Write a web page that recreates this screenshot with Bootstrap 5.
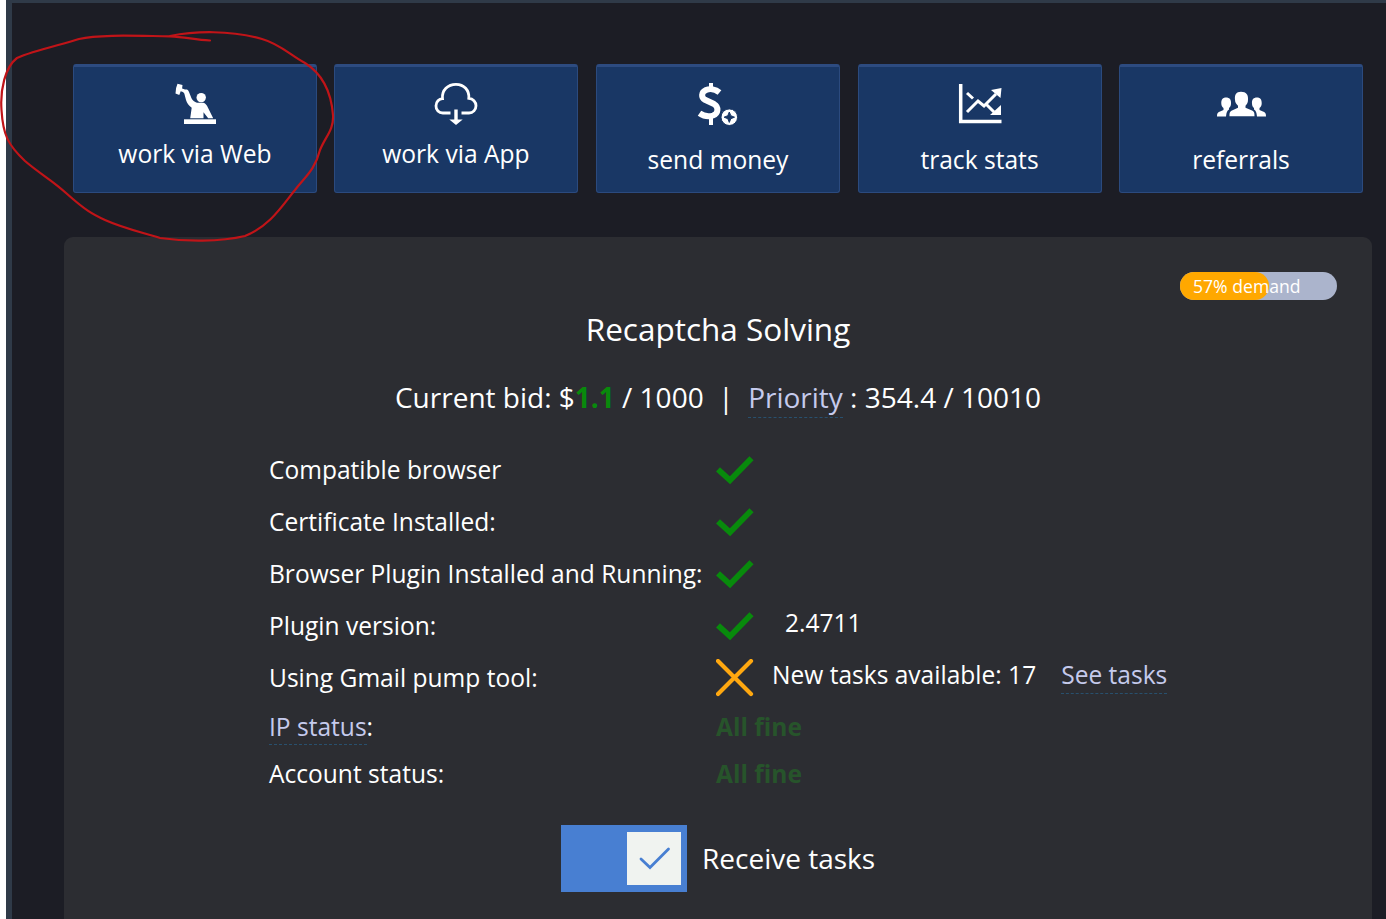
<!DOCTYPE html>
<html lang="en">
<head>
<meta charset="utf-8">
<meta name="viewport" content="width=device-width, initial-scale=1">
<title>Recaptcha Solving</title>
<link href="https://cdn.jsdelivr.net/npm/bootstrap@5.3.0/dist/css/bootstrap.min.css" rel="stylesheet">
<style>
body{font-family:"Open Sans","Noto Sans",sans-serif;background:#fff;color:#fff;height:919px;overflow:hidden}
.shell{height:919px;margin-left:6px;border-left:6px solid #2f3a48;border-top:3px solid #2f3a48;background:#1c1d25;padding:61px 14px 0 52px}
.tiles{display:grid;grid-template-columns:repeat(5,244px);justify-content:space-between;margin:0 9px 44px}
.tile{width:244px;height:129px;background:#193765;border:1px solid #2b4a7e;border-top:3px solid #2d4b80;border-radius:3px;color:#fff;font-size:24.6px;line-height:34px;padding-top:13px}
.tile:nth-child(2){margin-left:-.6px}
.tile svg{display:block;margin-bottom:1px}
.tile.low svg{margin-bottom:7px}
.panel{height:690px;background:#2c2d32;border-radius:9px 9px 8px 8px;padding:35px 35px 0}
.demand{width:157px;height:28px;border-radius:14px;background:#abb4cc;font-size:17.6px;line-height:28px}
.demand-fill{height:28px;border-radius:14px;background:#ffa800}
.demand-text{left:13px;top:0}
.heading{font-size:31.500px;line-height:44px;margin:7px 0 0}
.bid{font-size:28px;line-height:40px;margin-top:26px;white-space:pre}
.good{color:#088a0c;font-weight:700}
.dim{color:#27542b;font-weight:700}
.dotted{color:#c5caec;text-decoration:none;border-bottom:1px dashed #28506e}
.bid .dotted,.checks .dotted{padding-bottom:1px}
.checks{margin:27px 0 0 170px;font-size:24.550px;display:grid;grid-template-columns:447px 1fr;grid-template-rows:repeat(5,52px) 46px 48px;align-items:center;line-height:34px;white-space:nowrap}
.value{position:relative;top:-3px}
a.value{top:-2px}
.receive{margin-top:27px;font-size:28px;padding-left:462px}
.switchbox{width:126px;height:67px;background:#487fd2;padding:7px 6px}
.knob{width:54px;height:53px;background:#f0f3f0}
.receive-label{margin:-2px 0 0 15px}
.marker{left:0;top:0;pointer-events:none}
</style>
</head>
<body>
<main class="shell">
  <nav class="tiles text-center">
    <a class="tile d-flex flex-column align-items-center text-decoration-none" href="#">
      <svg width="70" height="56" viewBox="0 10 70 56"><g fill="#fff"><path d="M17.500 13.700l5 1.300-.4 3.600 2.900 1 2-.2c1 .6 1.600 1.300 2 2.600l2.500 6.200c1 2 3 3.800 5.500 4.600h6c1.800.2 3 1.400 4 3L53.200 48.200h-5L43.500 42.300V48.200H30.200l1.500-10.500c-3-2-4.700-4.700-5.700-7.700l-1.700-6.600-1.300-1.500-2.300-.6-1.400 3.800-3.800-1.600.6-5.500z"/><circle cx="41.200" cy="27.600" r="4.700"/><path d="M24 49.300h32v4.700H24z"/></g></svg>
      <span>work via Web</span></a>
    <a class="tile d-flex flex-column align-items-center text-decoration-none" href="#">
      <svg width="70" height="56" viewBox="1 10 70 56"><path d="M30.500 43H23a6.800 6.800 0 0 1-7-7.200c0-4 3-7 6.500-7.200C21.500 20 28 14.300 36 14.300s13.500 6 12.800 14c4.200.3 7.200 3.500 7.200 7.500s-3 7.200-7 7.200h-7.500" fill="none" stroke="#fff" stroke-width="2.800"/><path d="M34.300 39.500h3.400v10h5L36 55l-6.700-5.500h5z" fill="#fff"/></svg>
      <span>work via App</span></a>
    <a class="tile low d-flex flex-column align-items-center text-decoration-none" href="#">
      <svg width="70" height="56" viewBox="-2 10 70 56"><path d="M34.500 22.500c-4-3.200-9.500-4.200-13.500-2.500-5 2.300-5 7.500-1 9.800l9 4.200c5 3 4.500 9.500-1 11.500-5 1.600-9.500.5-13.500-2.300" fill="none" stroke="#fff" stroke-width="6"/><path d="M26 13v7m0 26v9" fill="none" stroke="#fff" stroke-width="4"/><circle cx="44.300" cy="47.200" r="8.300" fill="#fff" stroke="#193765"/><path d="M44.300 42l1.500 3.700 3.700 1.500-3.700 1.500-1.500 3.700-1.500-3.700-3.700-1.500 3.700-1.500z" fill="#193765" stroke="#193765" stroke-width="1"/></svg>
      <span>send money</span></a>
    <a class="tile low d-flex flex-column align-items-center text-decoration-none" href="#">
      <svg width="70" height="56" viewBox="0 10 70 56"><path d="M15.700 14v37.500H56.500" fill="none" stroke="#fff" stroke-width="3.500"/><path d="M22 42l11-11 6 5 12-12M22 23l6 5.500m14 6.500l7 7" fill="none" stroke="#fff" stroke-width="3"/><path d="M46 20l10.500-2-1 10zM56 35v10H45z" fill="#fff"/></svg>
      <span>track stats</span></a>
    <a class="tile low d-flex flex-column align-items-center text-decoration-none" href="#">
      <svg width="70" height="56" viewBox="1 9.500 70 56"><g fill="#fff"><path d="M36 21.300c5.300 0 7.500 3 7 8 0 3-1 4.500-2.500 6v2l6 2.500c3 1.200 3 3 3 6H24.500c0-3 0-4.800 3-6l5.500-2.500v-2c-1.500-1.500-3-3-3-6-.5-5 1-8 6-8z"/><path id="side" d="M21 27c3.500 0 5.300 2 5 6 0 2-.8 3.500-2 4.500v1.500c-2 1-2.500 3-3 7h-9c0-3 .5-4 3-5l3.500-1.500v-2c-1.200-1-2.200-2.500-2.200-4.500-.2-4 1.500-6 4.700-6z"/><use href="#side" transform="matrix(-1 0 0 1 73 0)"/></g></svg>
      <span>referrals</span></a>
  </nav>

  <section class="panel">
    <div class="demand position-relative ms-auto">
      <div class="demand-fill" style="width:57%"></div>
      <span class="demand-text position-absolute">57% demand</span>
    </div>
    <h1 class="heading text-center fw-normal">Recaptcha Solving</h1>
    <div class="bid text-center">Current bid: $<span class="good">1.1</span> / 1000 &nbsp;|&nbsp; <a class="dotted" href="#">Priority</a> : 354.4 / 10010</div>

    <div class="checks">
      <div>Compatible browser</div>
      <div><svg class="d-block" width="38" height="38" viewBox="0 1 38 38"><path d="M2 19.300l12 11L35.500 8.300" fill="none" stroke="#088a0c" stroke-width="5.800"/></svg></div>
      <div>Certificate Installed:</div>
      <div><svg class="d-block" width="38" height="38" viewBox="0 1 38 38"><path d="M2 19.300l12 11L35.500 8.300" fill="none" stroke="#088a0c" stroke-width="5.800"/></svg></div>
      <div>Browser Plugin Installed and Running:</div>
      <div><svg class="d-block" width="38" height="38" viewBox="0 1 38 38"><path d="M2 19.300l12 11L35.500 8.300" fill="none" stroke="#088a0c" stroke-width="5.800"/></svg></div>
      <div>Plugin version:</div>
      <div class="d-flex align-items-center"><svg width="38" height="38" viewBox="0 1 38 38"><path d="M2 19.300l12 11L35.500 8.300" fill="none" stroke="#088a0c" stroke-width="5.800"/></svg><span class="value" style="margin-left:31px">2.4711</span></div>
      <div>Using Gmail pump tool:</div>
      <div class="d-flex align-items-center"><svg width="38" height="38" viewBox="0 .5 38 38"><path d="M2 2.500l33 33M35 2.500l-33 33" fill="none" stroke="#ffa810" stroke-width="4.200" stroke-linecap="round"/></svg><span class="value" style="margin-left:18px">New tasks available: 17</span><a class="dotted value" style="margin-left:25px" href="#">See tasks</a></div>
      <div><a class="dotted" href="#">IP status</a>:</div>
      <div class="dim">All fine</div>
      <div>Account status:</div>
      <div class="dim">All fine</div>
    </div>

    <label class="receive d-flex align-items-center">
      <span class="switchbox d-flex justify-content-end"><span class="knob"><svg class="d-block" width="54" height="53" viewBox="0 0 54 53"><path d="M14 27l9 8.500L41.500 17" fill="none" stroke="#487fd2" stroke-width="2.800" stroke-linecap="round"/></svg></span></span>
      <span class="receive-label">Receive tasks</span>
    </label>
  </section>
</main>
<svg class="marker position-absolute" width="345" height="250" viewBox="0 0 345 250"><path d="M210 40.500C195 40 186 37 170 36.300C140 36 100 34 79 39C65 44 35 50 17 58C5 67 0 90 1.500 110C3 135 8 145 25 161C40 174 52 180 66 193C85 210 92 214 105 220C125 229 145 233 160 238C185 241.500 220 242 245 236C270 226 282 206 295 190C305 177 315 170 320 150C325 137 334 130 333 115C331 90 321 73 305 63C290 55 280 44 262 39C230 30 195 31 170 36" fill="none" stroke="#c01418" stroke-width="2.200" stroke-linecap="round"/></svg>
<script src="https://cdn.jsdelivr.net/npm/bootstrap@5.3.0/dist/js/bootstrap.bundle.min.js"></script>
</body>
</html>
